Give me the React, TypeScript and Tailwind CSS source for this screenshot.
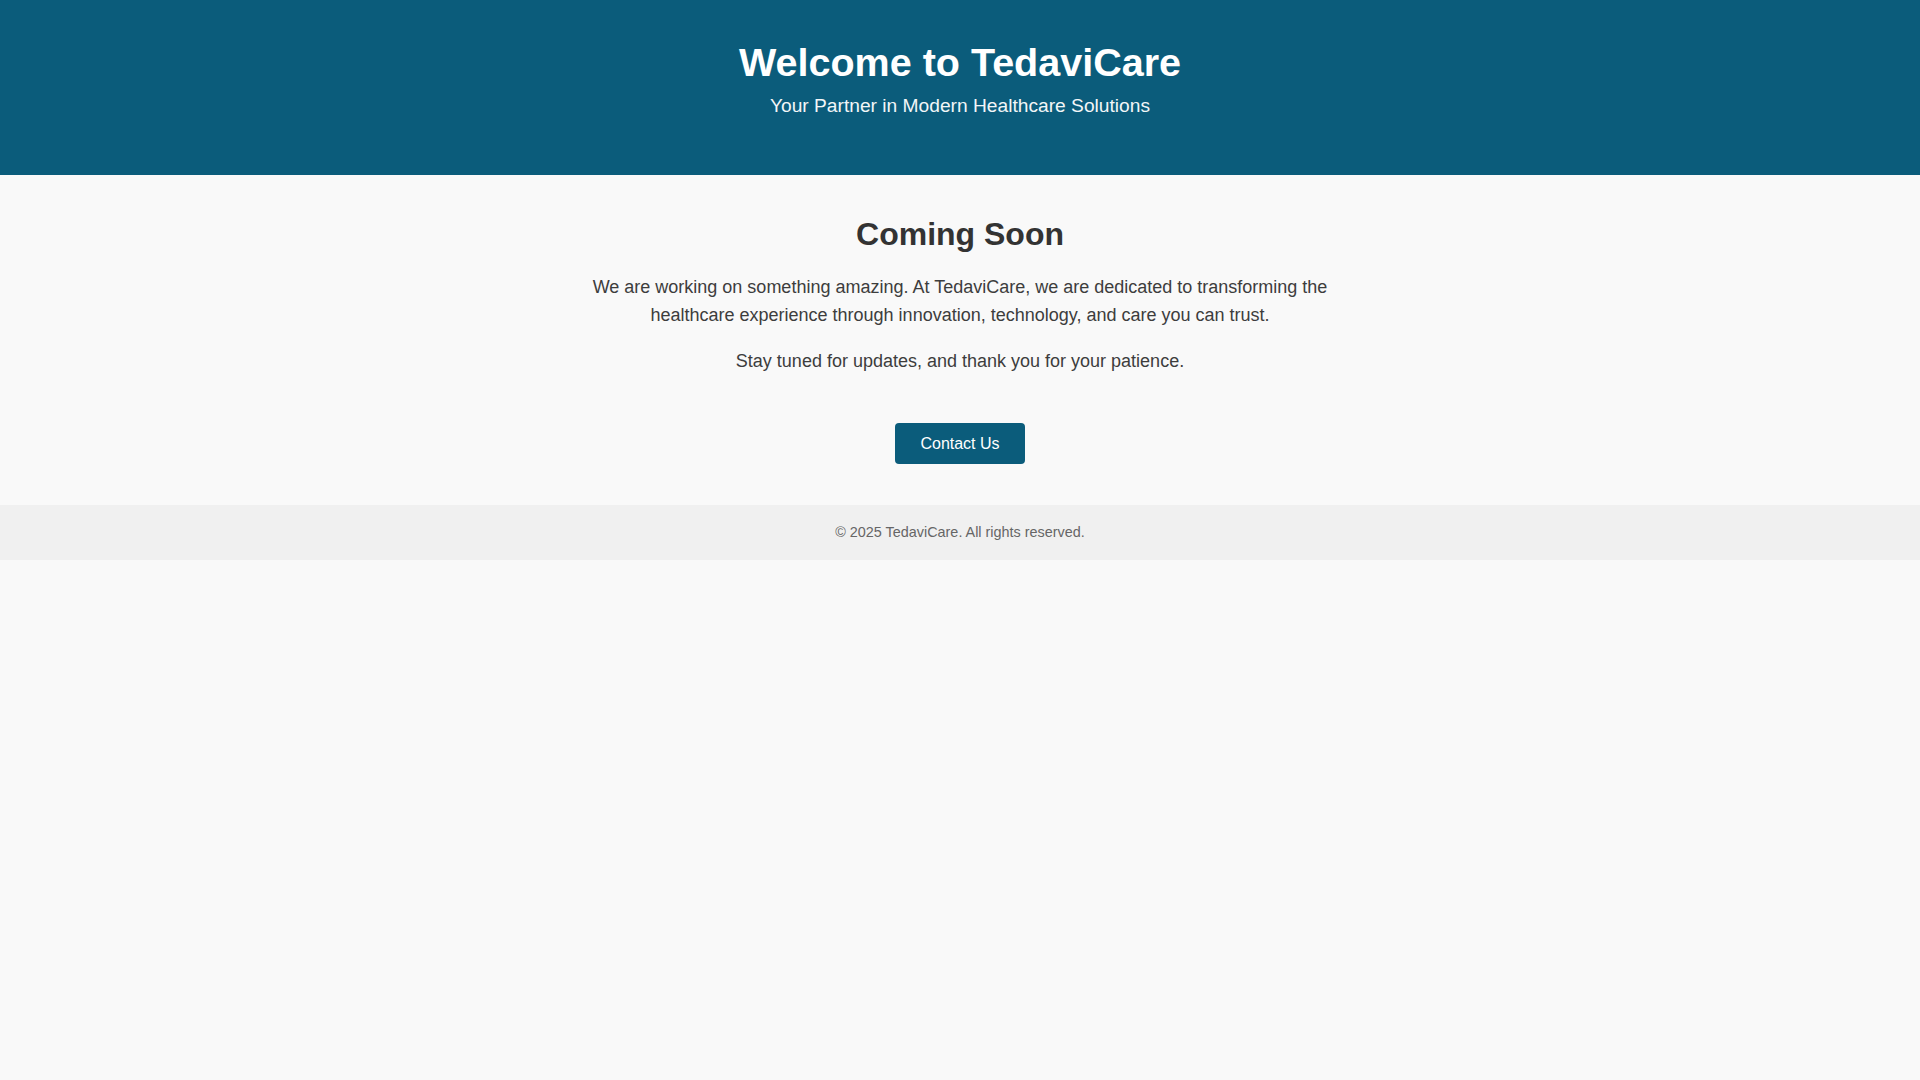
import React from 'react';

const App = () => {
    return (
        <div className="min-h-screen bg-[#f9f9f9] text-[#333] font-['Liberation_Sans',Arial,sans-serif]">
            <header className="bg-[#0b5c7b] text-white text-center pt-[33px] pb-[53px] px-4">
                <h1 className="text-[39.5px] leading-[58px] font-bold">Welcome to TedaviCare</h1>
                <p className="text-[19.2px] leading-[30.72px] text-[#f2f6f8]">Your Partner in Modern Healthcare Solutions</p>
            </header>

            <main className="max-w-[800px] mx-auto text-center pt-[40px] pb-[41px] px-4">
                <h2 className="text-[32px] leading-[38.4px] font-bold">Coming Soon</h2>
                <p className="mt-5 text-lg leading-7 text-[#3d3d3d]">
                    We are working on something amazing. At TedaviCare, we are dedicated to transforming the healthcare experience through innovation, technology, and care you can trust.
                </p>
                <p className="mt-[18px] text-lg leading-7 text-[#3d3d3d]">Stay tuned for updates, and thank you for your patience.</p>
                <button className="mt-[48px] bg-[#0b5c7b] text-white text-base leading-[19px] px-[25px] py-[11px] rounded-[4px]">
                    Contact Us
                </button>
            </main>

            <footer className="bg-[#f0f0f0] text-center py-4">
                <p className="text-[14.4px] leading-[23px] text-[#666]">© 2025 TedaviCare. All rights reserved.</p>
            </footer>
        </div>
    );
};

export default App;
